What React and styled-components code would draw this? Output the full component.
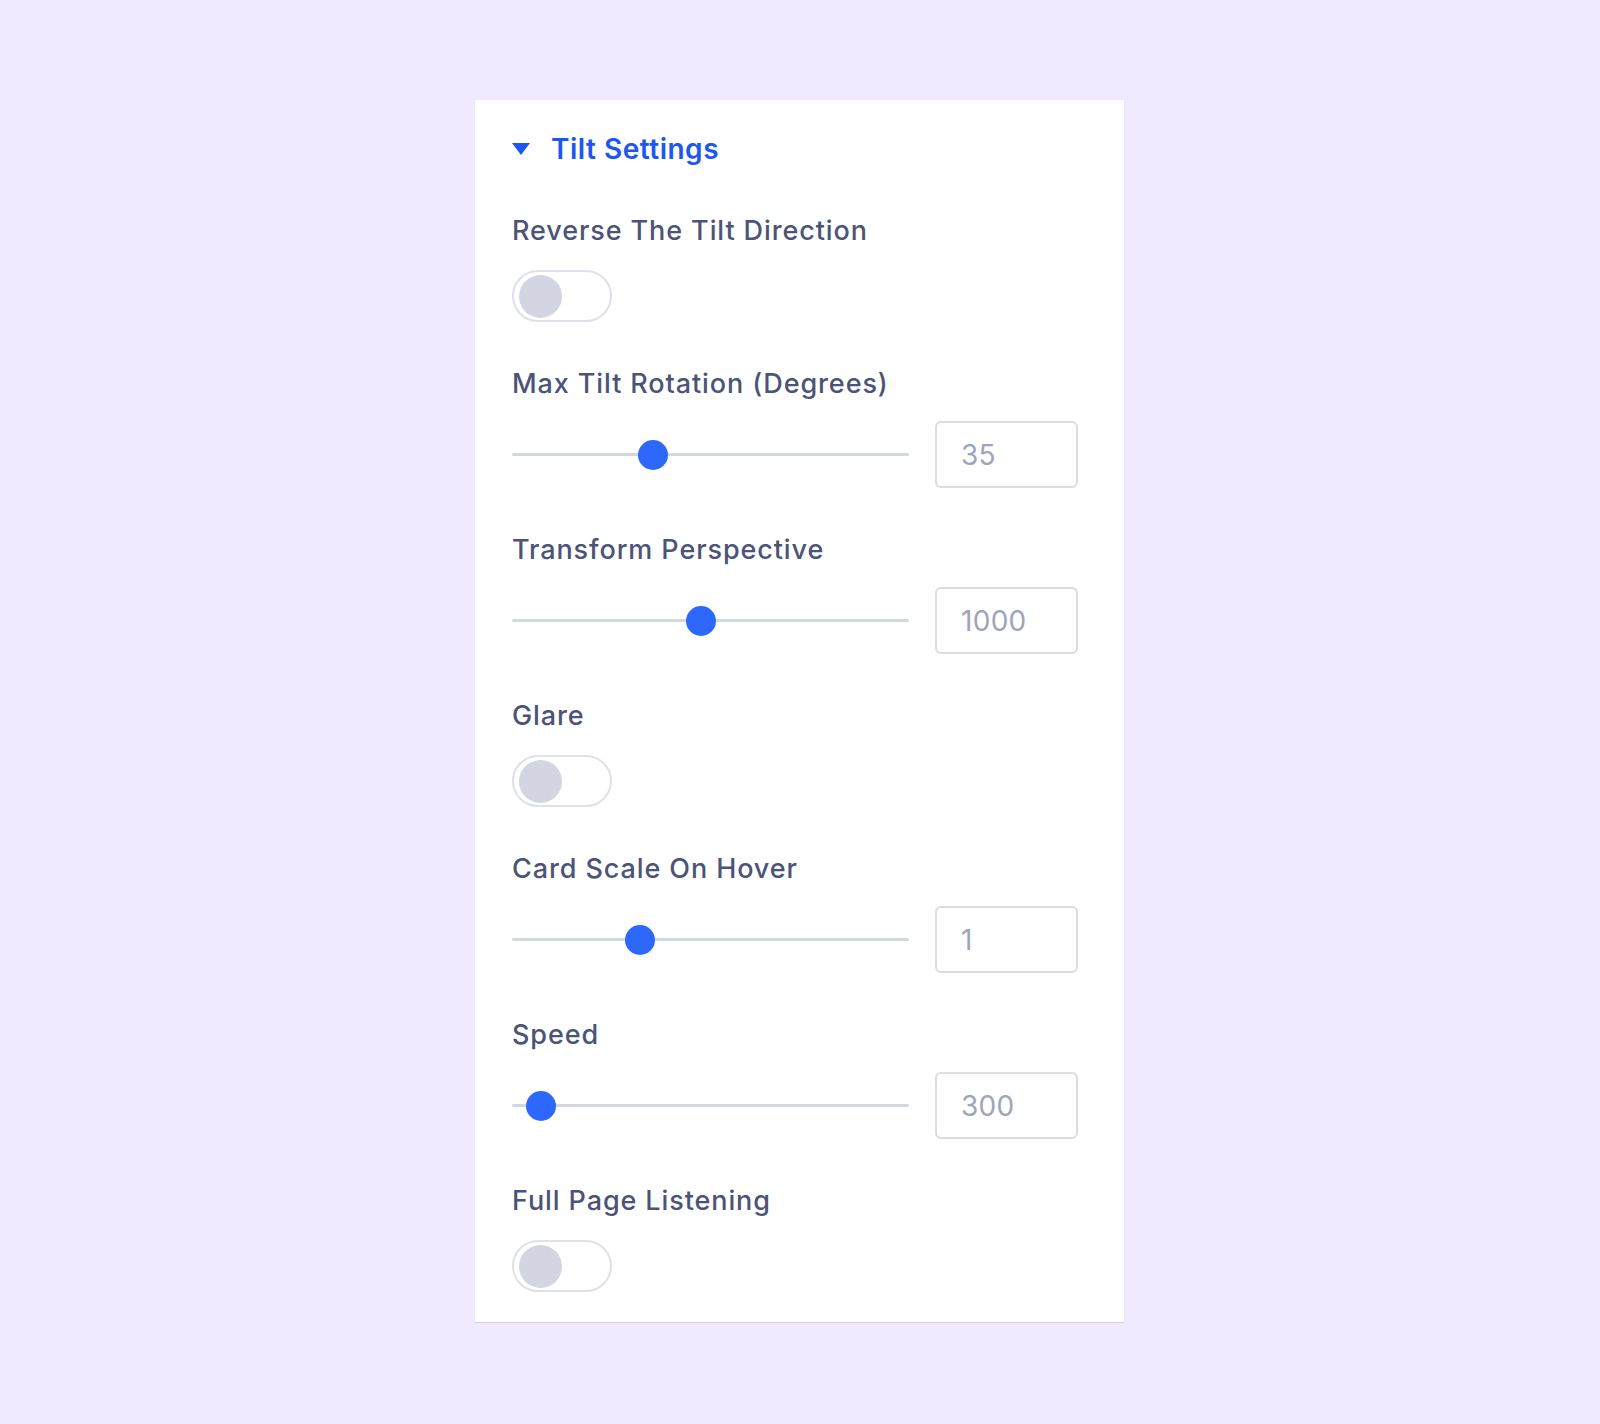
import React from 'react'
import styled, { createGlobalStyle } from 'styled-components'

const GlobalStyle = createGlobalStyle`
  html, body {
    margin: 0;
    padding: 0;
    background: #f1e9fe;
    font-family: Inter, "Noto Sans", sans-serif;
  }
`

const Page = styled.div`
  width: 1600px;
  min-height: 1424px;
  padding: 100px 0 0 475px;
  box-sizing: border-box;
  display: flex;
  align-items: flex-start;
`

const Panel = styled.div`
  width: 649px;
  box-sizing: border-box;
  background: #fff;
  padding: 31px 46px 30px 37px;
  box-shadow: 0 1px 1px #d3d3dc;
  display: flex;
  flex-direction: column;
`

const Header = styled.div`
  display: flex;
  align-items: center;
  gap: 21px;
  height: 36px;
  margin-bottom: 49px;
`

const HeaderTitle = styled.span`
  font-size: 28px;
  font-weight: 600;
  color: #1c57f2;
  letter-spacing: 0.5px;
`

const Field = styled.div`
  display: flex;
  flex-direction: column;
  margin-bottom: 47px;
  &:last-child {
    margin-bottom: 0;
  }
`

const Label = styled.div`
  font-size: 27px;
  font-weight: 500;
  line-height: 30px;
  letter-spacing: 0.9px;
  color: #4b5478;
  margin-bottom: ${p => (p.$toggle ? '24px' : '22px')};
`

const Toggle = styled.div`
  width: 100px;
  height: 52px;
  box-sizing: border-box;
  border: 2px solid #dfe1ea;
  border-radius: 26px;
  display: flex;
  align-items: center;
  padding-left: 5px;
  background: #fff;
`

const Knob = styled.div`
  width: 43px;
  height: 43px;
  border-radius: 50%;
  background: #d3d6e2;
`

const SliderRow = styled.div`
  display: flex;
  align-items: center;
  gap: 26px;
`

const Track = styled.div`
  position: relative;
  flex: 1;
  height: 3px;
  background: #d3d7e2;
  border-radius: 2px;
`

const Thumb = styled.div`
  position: absolute;
  top: 50%;
  width: 30px;
  height: 30px;
  margin-top: -15px;
  border-radius: 50%;
  background: #2d67fb;
`

const ValueBox = styled.div`
  width: 143px;
  height: 67px;
  box-sizing: border-box;
  border: 2px solid #dadce6;
  border-radius: 6px;
  display: flex;
  align-items: center;
  padding-left: 24px;
  font-size: 28px;
  letter-spacing: 0.3px;
  color: #9ea4bb;
`

const Caret = () => (
  <svg width="18" height="12" viewBox="0 0 18 12">
    <path d="M0 0 H18 L9 12 Z" fill="#1c57f2" />
  </svg>
)

const Slider = ({ pct, value }) => (
  <SliderRow>
    <Track>
      <Thumb style={{ left: `calc(${pct} * (100% - 30px))` }} />
    </Track>
    <ValueBox>{value}</ValueBox>
  </SliderRow>
)

const fields = [
  { label: 'Reverse The Tilt Direction', type: 'toggle' },
  { label: 'Max Tilt Rotation (Degrees)', type: 'slider', pct: 0.343, value: '35' },
  { label: 'Transform Perspective', type: 'slider', pct: 0.474, value: '1000' },
  { label: 'Glare', type: 'toggle' },
  { label: 'Card Scale On Hover', type: 'slider', pct: 0.308, value: '1' },
  { label: 'Speed', type: 'slider', pct: 0.038, value: '300' },
  { label: 'Full Page Listening', type: 'toggle' },
]

const App = () => {
  return (
    <Page>
      <GlobalStyle />
      <Panel>
        <Header>
          <Caret />
          <HeaderTitle>Tilt Settings</HeaderTitle>
        </Header>
        {fields.map(f => (
          <Field key={f.label}>
            <Label $toggle={f.type === 'toggle'}>{f.label}</Label>
            {f.type === 'toggle' ? (
              <Toggle>
                <Knob />
              </Toggle>
            ) : (
              <Slider pct={f.pct} value={f.value} />
            )}
          </Field>
        ))}
      </Panel>
    </Page>
  )
}

export default App
